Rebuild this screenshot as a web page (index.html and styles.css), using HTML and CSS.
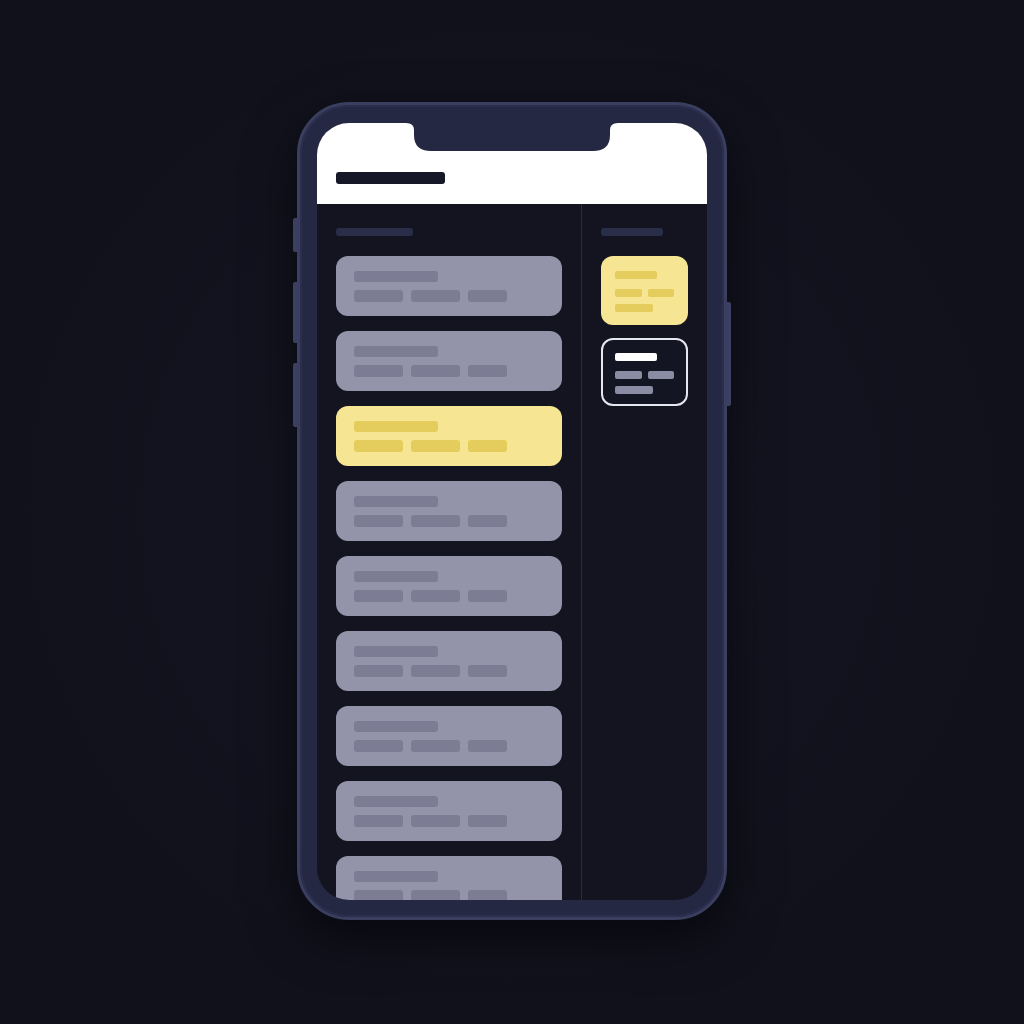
FILE: index.html
```html
<!DOCTYPE html>
<html>
<head>
<meta charset="utf-8">
<link rel="stylesheet" href="styles.css">
</head>
<body>
<div class="stage">
  <div class="phone">
    <span class="btn btn-l1"></span>
    <span class="btn btn-l2"></span>
    <span class="btn btn-l3"></span>
    <span class="btn btn-r1"></span>
    <div class="screen">
      <svg class="notch" width="390" height="30" viewBox="0 0 390 30">
        <path d="M89 0 Q97 0 97 7 L97 12 Q97 28 114 28 L276 28 Q293 28 293 12 L293 7 Q293 0 301 0 Z" fill="#252843"/>
      </svg>
      <div class="header"><div class="title"></div></div>
      <div class="body">
        <div class="col-left">
          <div class="label label-l"></div>
          <div class="list">
            <div class="card"><div class="b1"></div><div class="row"><i class="w49"></i><i class="w49"></i><i class="w39"></i></div></div>
            <div class="card"><div class="b1"></div><div class="row"><i class="w49"></i><i class="w49"></i><i class="w39"></i></div></div>
            <div class="card card-y"><div class="b1"></div><div class="row"><i class="w49"></i><i class="w49"></i><i class="w39"></i></div></div>
            <div class="card"><div class="b1"></div><div class="row"><i class="w49"></i><i class="w49"></i><i class="w39"></i></div></div>
            <div class="card"><div class="b1"></div><div class="row"><i class="w49"></i><i class="w49"></i><i class="w39"></i></div></div>
            <div class="card"><div class="b1"></div><div class="row"><i class="w49"></i><i class="w49"></i><i class="w39"></i></div></div>
            <div class="card"><div class="b1"></div><div class="row"><i class="w49"></i><i class="w49"></i><i class="w39"></i></div></div>
            <div class="card"><div class="b1"></div><div class="row"><i class="w49"></i><i class="w49"></i><i class="w39"></i></div></div>
            <div class="card"><div class="b1"></div><div class="row"><i class="w49"></i><i class="w49"></i><i class="w39"></i></div></div>
          </div>
        </div>
        <div class="divider"></div>
        <div class="col-right">
          <div class="label label-r"></div>
          <div class="mini mini-y">
            <div class="m1"></div>
            <div class="mrow"><i class="w27"></i><i class="w26"></i></div>
            <div class="mrow mrow3"><i class="w38"></i></div>
          </div>
          <div class="mini mini-o">
            <div class="m1"></div>
            <div class="mrow"><i class="w27"></i><i class="w26"></i></div>
            <div class="mrow mrow3"><i class="w38"></i></div>
          </div>
        </div>
      </div>
    </div>
  </div>
</div>
</body>
</html>
```

FILE: styles.css
```css
html, body {
  margin: 0;
  padding: 0;
  background: #11121d;
  font-family: "Liberation Sans", Arial, sans-serif;
}
.stage {
  width: 1024px;
  height: 1024px;
  display: flex;
  align-items: center;
  justify-content: center;
  background: radial-gradient(ellipse at 50% 50%, #141522 0%, #10111b 70%);
}
.phone {
  position: relative;
  width: 430px;
  height: 818px;
  box-sizing: border-box;
  padding: 18px 17px 17px 17px;
  border: 3px solid #3a3f60;
  border-radius: 52px;
  background: #252843;
  box-shadow: 0 18px 50px rgba(0, 0, 0, 0.55), inset 0 0 0 2px #2b2f4d;
  margin-top: -2px;
}
.btn {
  position: absolute;
  width: 4px;
  background: #3b4062;
}
.btn-l1 { left: -7px; top: 113px; height: 34px; border-radius: 2px 0 0 2px; }
.btn-l2 { left: -7px; top: 177px; height: 61px; border-radius: 2px 0 0 2px; }
.btn-l3 { left: -7px; top: 258px; height: 64px; border-radius: 2px 0 0 2px; }
.btn-r1 { right: -7px; top: 197px; height: 104px; border-radius: 0 2px 2px 0; }
.screen {
  position: relative;
  width: 390px;
  height: 777px;
  border-radius: 32px;
  overflow: hidden;
  background: #131420;
  display: flex;
  flex-direction: column;
}
.notch {
  position: absolute;
  left: 0;
  top: 0;
  display: block;
}
.header {
  height: 81px;
  flex: none;
  background: #ffffff;
  padding: 49px 0 0 19px;
  box-sizing: border-box;
}
.title {
  width: 109px;
  height: 12px;
  border-radius: 3px;
  background: #161727;
}
.body {
  flex: 1;
  display: flex;
  min-height: 0;
}
.col-left {
  width: 264px;
  flex: none;
  box-sizing: border-box;
  padding: 24px 19px 0 19px;
}
.divider {
  width: 1px;
  background: #2a2c41;
  flex: none;
}
.col-right {
  flex: 1;
  box-sizing: border-box;
  padding: 24px 19px 0 19px;
}
.label {
  height: 8px;
  border-radius: 3px;
  background: #2a2d47;
  margin-bottom: 20px;
}
.label-l { width: 77px; }
.label-r { width: 62px; }
.list {
  display: flex;
  flex-direction: column;
  gap: 15px;
}
.card {
  height: 60px;
  flex: none;
  box-sizing: border-box;
  border-radius: 12px;
  padding: 15px 18px;
  background: #9394aa;
}
.card .b1 {
  width: 84px;
  height: 11px;
  border-radius: 3px;
  background: #7c7d95;
}
.card .row {
  display: flex;
  gap: 8px;
  margin-top: 8px;
}
.card .row i {
  display: block;
  height: 12px;
  border-radius: 3px;
  background: #7c7d95;
}
.w49 { width: 49px; }
.w39 { width: 39px; }
.card-y { background: #f6e592; }
.card-y .b1, .card-y .row i { background: #e4cd5c; }
.mini {
  width: 87px;
  height: 69px;
  box-sizing: border-box;
  border-radius: 12px;
  padding: 15px 14px;
}
.mini-y {
  background: #f6e592;
  margin-bottom: 13px;
}
.mini .m1 {
  width: 42px;
  height: 8px;
  border-radius: 2px;
  background: #e4cd5c;
}
.mini .mrow {
  display: flex;
  gap: 6px;
  margin-top: 10px;
}
.mini .mrow3 { margin-top: 7px; }
.mini .mrow i {
  display: block;
  height: 8px;
  border-radius: 2px;
  background: #e4cd5c;
}
.w27 { width: 27px; }
.w26 { width: 26px; }
.w38 { width: 38px; }
.mini-o {
  height: 68px;
  border: 2px solid #e6e6ee;
  background: #141522;
  padding: 13px 12px;
}
.mini-o .m1 { background: #ffffff; }
.mini-o .mrow i { background: #8a8ca4; }
```
